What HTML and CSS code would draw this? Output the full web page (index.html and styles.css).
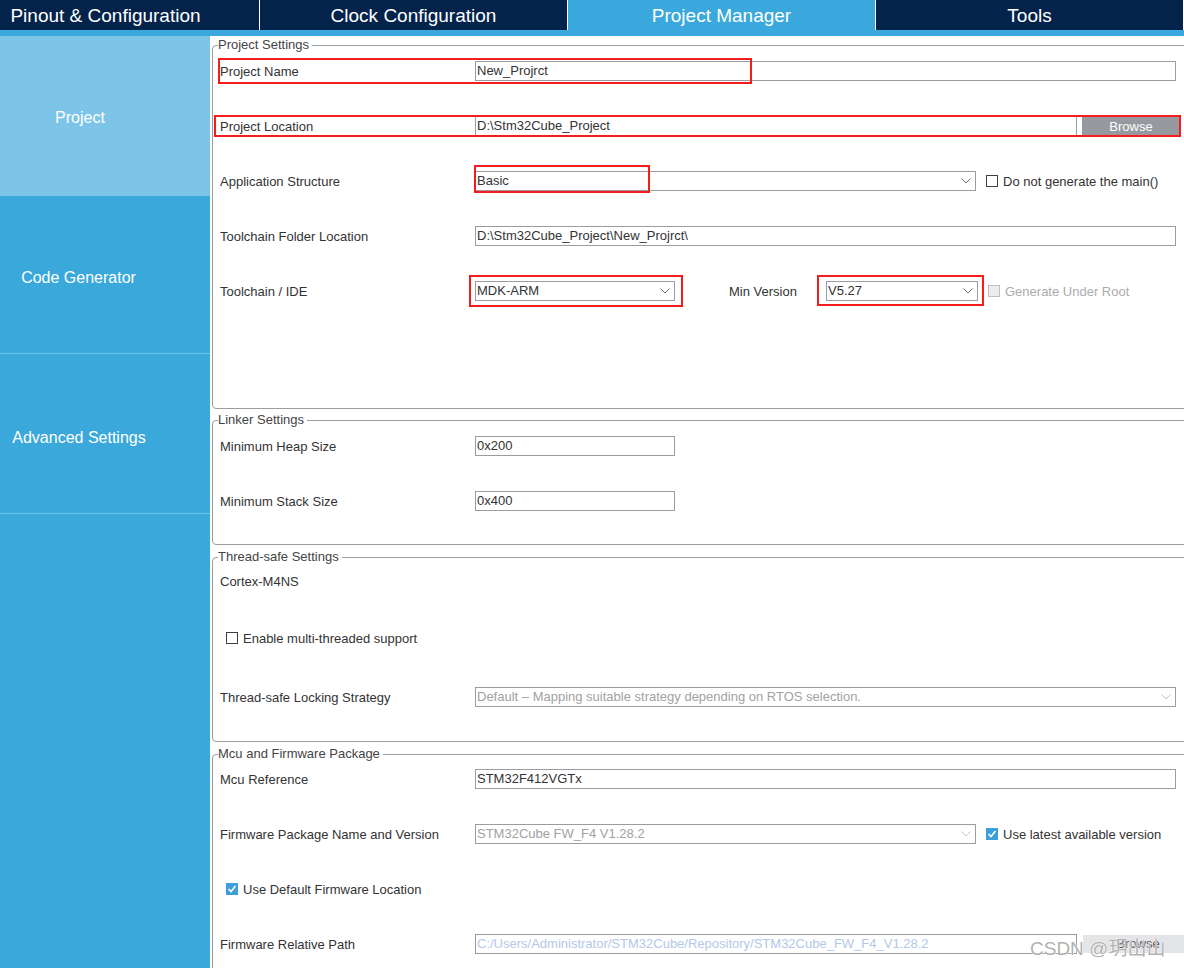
FILE: index.html
```html
<!DOCTYPE html>
<html>
<head>
<meta charset="utf-8">
<link rel="stylesheet" href="styles.css">
</head>
<body>
<nav class="tabs">
  <div class="tab">Pinout &amp; Configuration</div>
  <div class="tab">Clock Configuration</div>
  <div class="tab active">Project Manager</div>
  <div class="tab">Tools</div>
</nav>
<div class="strip"></div>
<div class="main">
  <aside class="sidebar">
    <div class="nav-item active">Project</div>
    <div class="nav-item gen">Code Generator</div>
    <div class="nav-item adv">Advanced Settings</div>
  </aside>
  <section class="content">
    <fieldset class="fs fs-project">
      <legend>Project Settings</legend>
      <div class="row">
        <span class="label">Project Name</span>
        <div class="input w-full">New_Projrct</div>
        <span class="mark m1"></span>
      </div>
      <div class="row">
        <span class="label">Project Location</span>
        <div class="input w-loc">D:\Stm32Cube_Project</div>
        <div class="btn btn-dark">Browse</div>
        <span class="mark m2"></span>
      </div>
      <div class="row">
        <span class="label">Application Structure</span>
        <div class="select w-mid"><span>Basic</span><svg class="chev" width="10" height="6" viewBox="0 0 10 6"><polyline points="0.5,0.5 5,5 9.5,0.5" fill="none" stroke="#707070" stroke-width="1"/></svg></div>
        <span class="check"></span><span class="check-label">Do not generate the main()</span>
        <span class="mark m3"></span>
      </div>
      <div class="row">
        <span class="label">Toolchain Folder Location</span>
        <div class="input w-full">D:\Stm32Cube_Project\New_Projrct\</div>
      </div>
      <div class="row">
        <span class="label">Toolchain / IDE</span>
        <div class="select w-small"><span>MDK-ARM</span><svg class="chev" width="10" height="6" viewBox="0 0 10 6"><polyline points="0.5,0.5 5,5 9.5,0.5" fill="none" stroke="#707070" stroke-width="1"/></svg></div>
        <span class="label minver">Min Version</span>
        <div class="select w-ver"><span>V5.27</span><svg class="chev" width="10" height="6" viewBox="0 0 10 6"><polyline points="0.5,0.5 5,5 9.5,0.5" fill="none" stroke="#707070" stroke-width="1"/></svg></div>
        <span class="check disabled"></span><span class="check-label dim">Generate Under Root</span>
        <span class="mark m4"></span>
        <span class="mark m5"></span>
      </div>
    </fieldset>

    <fieldset class="fs fs-linker">
      <legend>Linker Settings</legend>
      <div class="row">
        <span class="label">Minimum Heap Size</span>
        <div class="input w-small">0x200</div>
      </div>
      <div class="row">
        <span class="label">Minimum Stack Size</span>
        <div class="input w-small">0x400</div>
      </div>
    </fieldset>

    <fieldset class="fs fs-thread">
      <legend>Thread-safe Settings</legend>
      <div class="row">
        <span class="label">Cortex-M4NS</span>
      </div>
      <div class="row row-check r-multi">
        <span class="check"></span><span class="check-label">Enable multi-threaded support</span>
      </div>
      <div class="row r-lock">
        <span class="label">Thread-safe Locking Strategy</span>
        <div class="select w-full disabled-sel"><span>Default – Mapping suitable strategy depending on RTOS selection.</span><svg class="chev" width="10" height="6" viewBox="0 0 10 6"><polyline points="0.5,0.5 5,5 9.5,0.5" fill="none" stroke="#c4c4c4" stroke-width="1"/></svg></div>
      </div>
    </fieldset>

    <fieldset class="fs fs-mcu">
      <legend>Mcu and Firmware Package</legend>
      <div class="row">
        <span class="label">Mcu Reference</span>
        <div class="input w-full">STM32F412VGTx</div>
      </div>
      <div class="row">
        <span class="label">Firmware Package Name and Version</span>
        <div class="select w-mid disabled-sel"><span>STM32Cube FW_F4 V1.28.2</span><svg class="chev" width="10" height="6" viewBox="0 0 10 6"><polyline points="0.5,0.5 5,5 9.5,0.5" fill="none" stroke="#c4c4c4" stroke-width="1"/></svg></div>
        <span class="check checked"><svg width="12" height="12" viewBox="0 0 12 12"><polyline points="2.5,6 5,8.5 9.5,3" fill="none" stroke="#fff" stroke-width="1.6"/></svg></span><span class="check-label">Use latest available version</span>
      </div>
      <div class="row row-check">
        <span class="check checked"><svg width="12" height="12" viewBox="0 0 12 12"><polyline points="2.5,6 5,8.5 9.5,3" fill="none" stroke="#fff" stroke-width="1.6"/></svg></span><span class="check-label">Use Default Firmware Location</span>
      </div>
      <div class="row">
        <span class="label">Firmware Relative Path</span>
        <div class="input w-loc disabled-path">C:/Users/Administrator/STM32Cube/Repository/STM32Cube_FW_F4_V1.28.2</div>
        <div class="btn btn-light">Browse</div>
      </div>
    </fieldset>
  </section>
</div>
<div class="watermark">CSDN @玥出山</div>
</body>
</html>
```

FILE: styles.css
```css
html, body {
  margin: 0;
  padding: 0;
}
body {
  width: 1184px;
  height: 968px;
  overflow: hidden;
  position: relative;
  background: #ffffff;
  font-family: "Liberation Sans", Arial, sans-serif;
}

/* top tabs */
.tabs {
  display: flex;
  height: 30px;
  margin-left: -48px;
  background: #03234b;
}
.tab {
  flex: none;
  width: 307px;
  border-right: 1px solid #ffffff;
  color: #ffffff;
  font-size: 19px;
  line-height: 32px;
  text-align: center;
  background: #03234b;
  white-space: nowrap;
}
.tab.active {
  background: #3aa8dc;
}
.strip {
  height: 6px;
  background: #3aa8dc;
}

/* layout */
.main {
  display: flex;
  height: 932px;
}
.sidebar {
  flex: none;
  width: 260px;
  margin-left: -50px;
  background: #3aa8da;
}
.nav-item {
  display: flex;
  align-items: center;
  justify-content: center;
  box-sizing: border-box;
  color: #ffffff;
  font-size: 16px;
}
.nav-item.active {
  height: 160px;
  padding-top: 4px;
  background: #7dc5e8;
}
.nav-item.gen {
  height: 158px;
  padding-top: 6px;
  padding-right: 3px;
  border-bottom: 1px solid #74c1ea;
}
.nav-item.adv {
  height: 160px;
  padding-top: 8px;
  padding-right: 2px;
  border-bottom: 1px solid #74c1ea;
}

.content {
  flex: 1;
  min-width: 0;
  overflow: hidden;
  padding-left: 2px;
}

/* fieldsets */
.fs {
  border: 1px solid #9a9ea3;
  border-radius: 4px;
  margin: 3px -20px 0 0;
  padding: 8px 0 0 0;
  min-width: 0;
}
.fs legend {
  margin-left: 5px;
  padding: 0 3px 0 0;
  font-size: 13px;
  line-height: 16px;
  color: #444444;
}
.fs-project {
  margin-top: 1px;
  padding-bottom: 107px;
}
.fs-linker {
  padding-bottom: 33px;
}
.fs-thread {
  margin-top: 4px;
  padding-top: 6px;
  padding-bottom: 34px;
}
.fs-mcu {
  margin-top: 4px;
  padding-top: 7px;
  padding-bottom: 40px;
}

.row {
  position: relative;
  display: flex;
  align-items: center;
  height: 20px;
  padding-left: 7px;
}
.row + .row {
  margin-top: 35px;
}
.row.r-multi {
  margin-top: 37px;
}
.row.r-lock {
  margin-top: 39px;
}
.row-check {
  padding-left: 13px;
}
.label {
  flex: none;
  width: 255px;
  font-size: 13px;
  color: #333333;
  white-space: nowrap;
}
.label.minver {
  width: 97px;
  margin-left: 54px;
}

/* inputs */
.input, .select {
  flex: none;
  box-sizing: border-box;
  height: 20px;
  border: 1px solid #999ca1;
  background: #ffffff;
  font-size: 13px;
  color: #333333;
  line-height: 18px;
  padding-left: 1px;
  white-space: nowrap;
  overflow: hidden;
}
.select {
  display: flex;
  align-items: center;
  justify-content: space-between;
  padding-right: 4px;
}
.chev {
  flex: none;
}
.w-full { width: 701px; }
.w-loc { width: 602px; }
.w-mid { width: 501px; }
.w-small { width: 200px; }
.w-ver { width: 152px; }

.disabled-sel {
  color: #a2a2a2;
}
.disabled-path {
  color: #b2c8e8;
}

.btn {
  flex: none;
  box-sizing: border-box;
  height: 19px;
  margin-left: 5px;
  font-size: 13px;
  line-height: 19px;
  text-align: center;
}
.btn-dark {
  width: 98px;
  background: #969aa0;
  color: #ffffff;
}
.btn-light {
  width: 110px;
  margin-left: 6px;
  height: 18px;
  line-height: 18px;
  background: #e4e5e7;
  color: #555555;
}

/* checkboxes */
.check {
  flex: none;
  box-sizing: border-box;
  width: 12px;
  height: 12px;
  margin-left: 10px;
  border: 1px solid #3f3f3f;
  background: #ffffff;
}
.row-check .check {
  margin-left: 0;
}
.check.disabled {
  border-color: #c0c0c0;
  background: #ececec;
}
.check.checked {
  border: none;
  background: #3d9fda;
}
.check.checked svg {
  display: block;
}
.check-label {
  margin-left: 5px;
  font-size: 13px;
  color: #333333;
  white-space: nowrap;
}
.check-label.dim {
  color: #ababab;
}

/* red annotation boxes */
.mark {
  position: absolute;
  box-sizing: border-box;
  border: 2px solid #f41c1c;
  pointer-events: none;
}
.m1 { left: 5px; top: -3px; width: 534px; height: 26px; }
.m2 { left: 1px; top: -1px; width: 967px; height: 22px; }
.m3 { left: 261px; top: -6px; width: 176px; height: 28px; }
.m4 { left: 256px; top: -6px; width: 214px; height: 32px; }
.m5 { left: 604px; top: -6px; width: 167px; height: 31px; }

/* watermark */
.watermark {
  position: absolute;
  left: 1030px;
  top: 933px;
  font-family: "Liberation Sans", "Noto Sans CJK SC", sans-serif;
  font-size: 19px;
  color: rgba(150, 150, 150, 0.75);
  text-shadow: 0 0 1px #ffffff, 0 0 1px #ffffff;
  white-space: nowrap;
}
```
